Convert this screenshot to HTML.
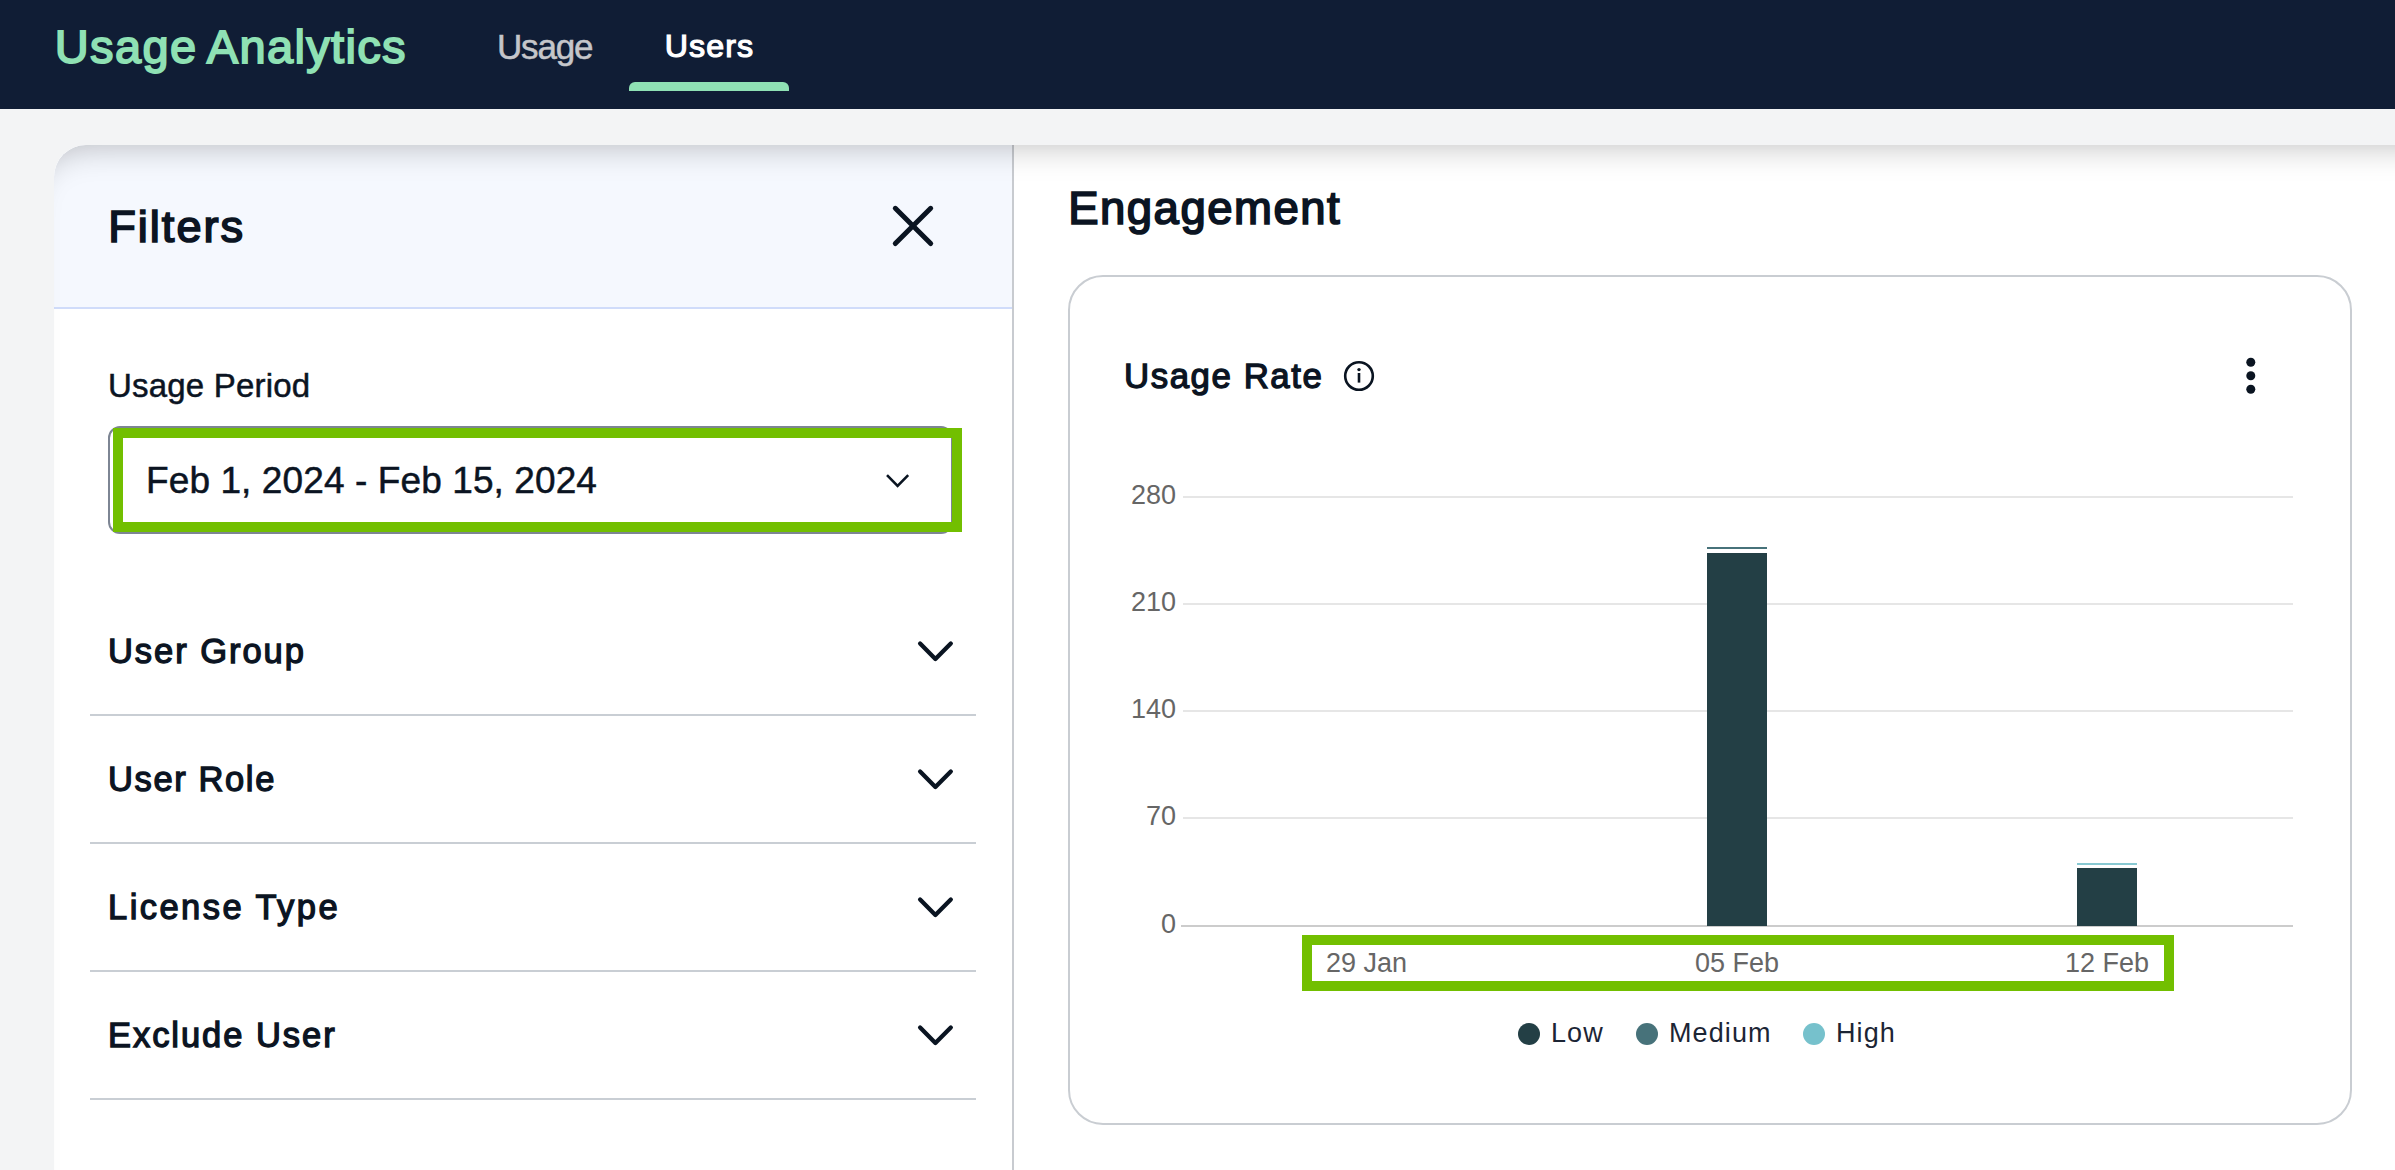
<!DOCTYPE html>
<html><head><meta charset="utf-8">
<style>
html,body{margin:0;padding:0;}
body{width:2395px;height:1170px;overflow:hidden;position:relative;background:#f3f4f5;font-family:"Liberation Sans",sans-serif;}
.a{position:absolute;white-space:nowrap;line-height:1;}
#hdr{position:absolute;left:0;top:0;width:2395px;height:109px;background:#101d35;}
#hdrline{position:absolute;left:0;top:109px;width:2395px;height:0px;background:#ffffff;}
#panel{position:absolute;left:54px;top:145px;width:2400px;height:1100px;background:#fff;border-top-left-radius:32px;overflow:hidden;}
#fhead{position:absolute;left:0;top:0;width:958px;height:162px;background:#f5f8fe;border-bottom:2px solid #d0dcfa;}
#vsep{position:absolute;left:958px;top:0;width:2px;height:1100px;background:#c8cbd0;}
#shadow{position:absolute;left:0;top:0;width:2400px;height:1100px;border-top-left-radius:32px;box-shadow:inset 0 30px 34px -30px rgba(0,0,0,0.27);}
.div{position:absolute;left:90px;width:886px;height:2px;background:#c9ced4;}
.dk{color:#0b1422;}
.yl{right:1219px;font-size:27px;color:#666666;text-align:right;}
.xl{top:950px;font-size:27px;color:#666666;}
.lg{top:1020px;font-size:27px;color:#1c2535;letter-spacing:1.1px;}
</style></head><body>
<div id="hdr"></div>
<div id="hdrline"></div>
<div class="a" id="t_brand" style="-webkit-text-stroke:1.79px currentColor;left:54.8px;top:23.2px;font-size:47px;letter-spacing:1.35px;word-spacing:-2.5px;color:#8fe1b4;">Usage Analytics</div>
<div class="a" id="t_usage" style="-webkit-text-stroke:0.5px currentColor;left:497px;top:29px;font-size:35px;letter-spacing:-1.2px;color:#c5c6ca;">Usage</div>
<div class="a" id="t_users" style="-webkit-text-stroke:1.22px currentColor;left:664.8px;top:30px;font-size:32.2px;letter-spacing:1.08px;color:#ffffff;">Users</div>
<div style="position:absolute;left:629px;top:82px;width:160px;height:9px;background:#8fe1b4;border-radius:6px 6px 0 0;"></div>

<div id="panel">
  <div id="fhead"></div>
  <div id="vsep"></div>
  <div id="shadow"></div>
</div>

<div class="a dk" id="t_filters" style="-webkit-text-stroke:1.72px currentColor;left:108.2px;top:204px;font-size:45.2px;letter-spacing:2px;">Filters</div>
<svg style="position:absolute;left:880px;top:195px;" width="64" height="64" viewBox="880 195 64 64">
  <path d="M895.3 208.3 L930.7 243.6 M930.7 208.3 L895.3 243.6" stroke="#0a1421" stroke-width="5" stroke-linecap="round" fill="none"/>
</svg>

<div class="a dk" id="t_period" style="-webkit-text-stroke:0.5px currentColor;left:108px;top:369px;font-size:33px;letter-spacing:0.2px;">Usage Period</div>
<div style="position:absolute;left:108px;top:426px;width:845px;height:108px;box-sizing:border-box;border:2px solid #7d8593;border-radius:12px;background:#fff;"></div>
<div style="position:absolute;left:113px;top:428px;width:849px;height:104px;box-sizing:border-box;border:10px solid #72bf00;"></div>
<div class="a dk" id="t_dates" style="-webkit-text-stroke:0.5px currentColor;left:146px;top:462px;font-size:37px;letter-spacing:0.1px;">Feb 1, 2024 - Feb 15, 2024</div>
<svg style="position:absolute;left:880px;top:465px;" width="36" height="30" viewBox="880 465 36 30">
  <path d="M887 475.2 L897.6 485.8 L908.2 475.2" stroke="#0a1421" stroke-width="2.6" fill="none"/>
</svg>

<div class="a dk" id="t_ug" style="-webkit-text-stroke:1.31px currentColor;left:108px;top:634px;font-size:34.5px;letter-spacing:1.96px;">User Group</div>
<div class="a dk" id="t_ur" style="-webkit-text-stroke:1.31px currentColor;left:108px;top:762px;font-size:34.5px;letter-spacing:1.62px;">User Role</div>
<div class="a dk" id="t_lt" style="-webkit-text-stroke:1.31px currentColor;left:108px;top:890px;font-size:34.5px;letter-spacing:2.45px;">License Type</div>
<div class="a dk" id="t_eu" style="-webkit-text-stroke:1.31px currentColor;left:108px;top:1018px;font-size:34.5px;letter-spacing:1.95px;">Exclude User</div>
<svg style="position:absolute;left:0;top:0;" width="1000" height="1170" viewBox="0 0 1000 1170">
  <path d="M920.1 643.6 L935.4 659.0 L950.8 643.6" stroke="#0a1421" stroke-width="4.3" stroke-linecap="round" stroke-linejoin="round" fill="none"/>
  <path d="M920.1 771.6 L935.4 787.0 L950.8 771.6" stroke="#0a1421" stroke-width="4.3" stroke-linecap="round" stroke-linejoin="round" fill="none"/>
  <path d="M920.1 899.6 L935.4 915.0 L950.8 899.6" stroke="#0a1421" stroke-width="4.3" stroke-linecap="round" stroke-linejoin="round" fill="none"/>
  <path d="M920.1 1027.6 L935.4 1043.0 L950.8 1027.6" stroke="#0a1421" stroke-width="4.3" stroke-linecap="round" stroke-linejoin="round" fill="none"/>
</svg>
<div class="div" style="top:714px;"></div>
<div class="div" style="top:842px;"></div>
<div class="div" style="top:970px;"></div>
<div class="div" style="top:1098px;"></div>

<div class="a dk" id="t_eng" style="-webkit-text-stroke:1.73px currentColor;left:1068.2px;top:186.2px;font-size:45.5px;letter-spacing:1.49px;">Engagement</div>

<div style="position:absolute;left:1068px;top:275px;width:1284px;height:850px;box-sizing:border-box;border:2px solid #c9cdd2;border-radius:35px;background:#fff;"></div>
<div class="a dk" id="t_rate" style="-webkit-text-stroke:1.32px currentColor;left:1124px;top:358.6px;font-size:34.8px;letter-spacing:1.57px;">Usage Rate</div>

<div class="a dk" style="left:0;top:0;"></div>
<svg style="position:absolute;left:1342px;top:359px;" width="34" height="34" viewBox="0 0 34 34">
  <circle cx="17" cy="17" r="13.8" stroke="#0a1421" stroke-width="2.6" fill="none"/>
  <circle cx="17" cy="10.6" r="1.7" fill="#0a1421"/>
  <rect x="15.7" y="14" width="2.6" height="9.6" fill="#0a1421"/>
</svg>
<svg style="position:absolute;left:2240px;top:355px;" width="22" height="42" viewBox="0 0 22 42">
  <circle cx="10.8" cy="7.3" r="4.5" fill="#0a1421"/>
  <circle cx="10.8" cy="20.8" r="4.5" fill="#0a1421"/>
  <circle cx="10.8" cy="34.3" r="4.5" fill="#0a1421"/>
</svg>
<div style="position:absolute;left:1183px;top:496px;width:1110px;height:2px;background:#e6e6e6;"></div>
<div style="position:absolute;left:1183px;top:603px;width:1110px;height:2px;background:#e6e6e6;"></div>
<div style="position:absolute;left:1183px;top:710px;width:1110px;height:2px;background:#e6e6e6;"></div>
<div style="position:absolute;left:1183px;top:817px;width:1110px;height:2px;background:#e6e6e6;"></div>
<div style="position:absolute;left:1181px;top:925px;width:1112px;height:2px;background:#cccccc;"></div>
<div class="a yl" id="y280" style="top:482px;">280</div>
<div class="a yl" id="y210" style="top:589px;">210</div>
<div class="a yl" id="y140" style="top:696px;">140</div>
<div class="a yl" id="y70" style="top:803px;">70</div>
<div class="a yl" id="y0" style="top:911px;">0</div>
<div style="position:absolute;left:1707px;top:547px;width:60px;height:2px;background:#47727a;"></div>
<div style="position:absolute;left:1707px;top:553px;width:60px;height:373px;background:#233f45;"></div>
<div style="position:absolute;left:2077px;top:863px;width:60px;height:2px;background:#88c9d2;"></div>
<div style="position:absolute;left:2077px;top:868px;width:60px;height:58px;background:#233f45;"></div>
<div style="position:absolute;left:1302px;top:935px;width:872px;height:56px;box-sizing:border-box;border:10px solid #72bf00;"></div>
<div class="a xl" id="x1" style="left:1326px;">29 Jan</div>
<div class="a xl" id="x2" style="left:1695px;">05 Feb</div>
<div class="a xl" id="x3" style="left:2065px;">12 Feb</div>
<div style="position:absolute;left:1518px;top:1023px;width:22px;height:22px;border-radius:50%;background:#233f45;"></div>
<div style="position:absolute;left:1636px;top:1023px;width:22px;height:22px;border-radius:50%;background:#47727a;"></div>
<div style="position:absolute;left:1803px;top:1023px;width:22px;height:22px;border-radius:50%;background:#76c1cc;"></div>
<div class="a lg" id="lg1" style="left:1551px;">Low</div>
<div class="a lg" id="lg2" style="left:1669px;">Medium</div>
<div class="a lg" id="lg3" style="left:1836px;">High</div>
</body></html>
